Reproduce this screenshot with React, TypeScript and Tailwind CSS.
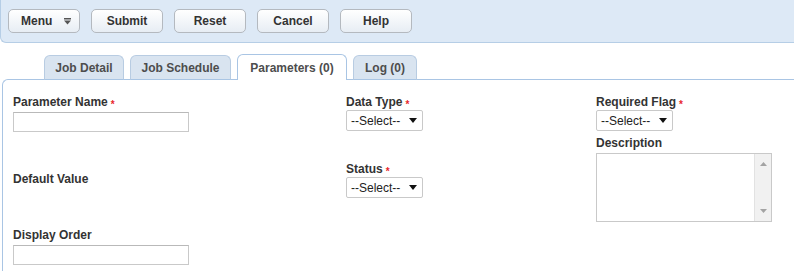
import React from 'react'

const buttons = ['Submit', 'Reset', 'Cancel', 'Help']

const tabs = [
  { label: 'Job Detail', width: 'w-[80px]' },
  { label: 'Job Schedule', width: 'w-[101px]' },
  { label: 'Parameters (0)', width: 'w-[110px]', active: true },
  { label: 'Log (0)', width: 'w-[64px]' }
]

const Label = ({ text, required }: { text: string; required?: boolean }) => (
  <div className="h-[14px] text-[12px] leading-[14px] font-bold text-[#333]">
    {text}
    {required && (
      <span className="ml-[3px] text-[10px] text-[#e8262b] align-[-2px]">*</span>
    )}
  </div>
)

const TextInput = ({ className = '' }: { className?: string }) => (
  <input
    type="text"
    className={`block h-[20px] w-[176px] border border-[#c9c9c9] border-t-[#b9b9b9] bg-white outline-none ${className}`}
  />
)

const SelectBox = ({ className = '' }: { className?: string }) => (
  <div
    className={`flex h-[21px] w-[77px] items-center justify-between rounded-[2px] border border-[#c9c9c9] bg-white pl-[4px] pr-[5px] text-[12px] text-[#222] ${className}`}
  >
    <span>--Select--</span>
    <svg width="8" height="5" viewBox="0 0 8 5">
      <path d="M0 0h8L4 5z" fill="#111" />
    </svg>
  </div>
)

const App = () => {
  return (
    <div className="h-[271px] w-[794px] overflow-hidden bg-white font-['Liberation_Sans',Arial,sans-serif]">
      {/* toolbar */}
      <div className="flex h-[43px] items-start gap-[11px] rounded-bl-[6px] border-b border-l border-[#b6cee6] bg-[#dde9f6] pl-[7px] pt-[9px]">
        <button className="flex h-[24px] w-[72px] items-center rounded-[5px] border border-[#b4b9bf] bg-linear-to-b from-white to-[#e7edf4] pl-[12px] text-[12px] font-bold text-[#333]">
          Menu
          <svg className="ml-[12px]" width="7" height="7" viewBox="0 0 7 7">
            <rect x="0" y="0" width="7" height="1.5" fill="#555" />
            <path d="M0 2.5h7L3.5 6.5z" fill="#555" />
          </svg>
        </button>
        {buttons.map((b) => (
          <button
            key={b}
            className="h-[24px] w-[72px] rounded-[5px] border border-[#b4b9bf] bg-linear-to-b from-white to-[#e7edf4] text-[12px] font-bold text-[#333]"
          >
            {b}
          </button>
        ))}
      </div>

      {/* tabs */}
      <div className="mt-[11px] flex h-[25px] items-end gap-[6px] pl-[44px]">
        {tabs.map((t) =>
          t.active ? (
            <div
              key={t.label}
              className={`${t.width} relative z-10 -mb-px flex h-[26px] items-center justify-center rounded-t-[6px] border border-b-0 border-[#a9c5e4] bg-white pt-[1px] text-[12px] font-bold text-[#4d4d4d]`}
            >
              {t.label}
            </div>
          ) : (
            <div
              key={t.label}
              className={`${t.width} -mb-px flex h-[25px] items-center justify-center rounded-t-[6px] border border-[#b8cce2] border-b-[#a9c5e4] bg-[#d9e4f0] text-[12px] font-bold text-[#4d4d4d]`}
            >
              {t.label}
            </div>
          )
        )}
      </div>

      {/* content panel */}
      <div className="ml-[2px] flex h-[200px] rounded-tl-[6px] border-l border-t border-[#a9c5e4] pl-[10px] pt-[15px]">
        <div className="w-[333px]">
          <Label text="Parameter Name" required />
          <TextInput className="mt-[3px]" />
          <div className="mt-[40px]">
            <Label text="Default Value" />
          </div>
          <div className="mt-[42px]">
            <Label text="Display Order" />
          </div>
          <TextInput className="mt-[3px]" />
        </div>

        <div className="w-[250px]">
          <Label text="Data Type" required />
          <SelectBox className="mt-[1px]" />
          <div className="mt-[31px]">
            <Label text="Status" required />
          </div>
          <SelectBox className="mt-[1px]" />
        </div>

        <div>
          <Label text="Required Flag" required />
          <SelectBox className="mt-[1px]" />
          <div className="mt-[5px]">
            <Label text="Description" />
          </div>
          <div className="mt-[3px] flex h-[69px] w-[176px] border border-[#c9c9c9] bg-white">
            <textarea className="h-full flex-1 resize-none bg-white outline-none" />
            <div className="flex w-[17px] flex-col items-center justify-between border-l border-[#e2e2e2] bg-[#f1f1f1] py-[8px]">
              <svg width="7" height="4" viewBox="0 0 7 4">
                <path d="M0 4h7L3.5 0z" fill="#a3a3a3" />
              </svg>
              <svg width="7" height="4" viewBox="0 0 7 4">
                <path d="M0 0h7L3.5 4z" fill="#a3a3a3" />
              </svg>
            </div>
          </div>
        </div>
      </div>
    </div>
  )
}

export default App
